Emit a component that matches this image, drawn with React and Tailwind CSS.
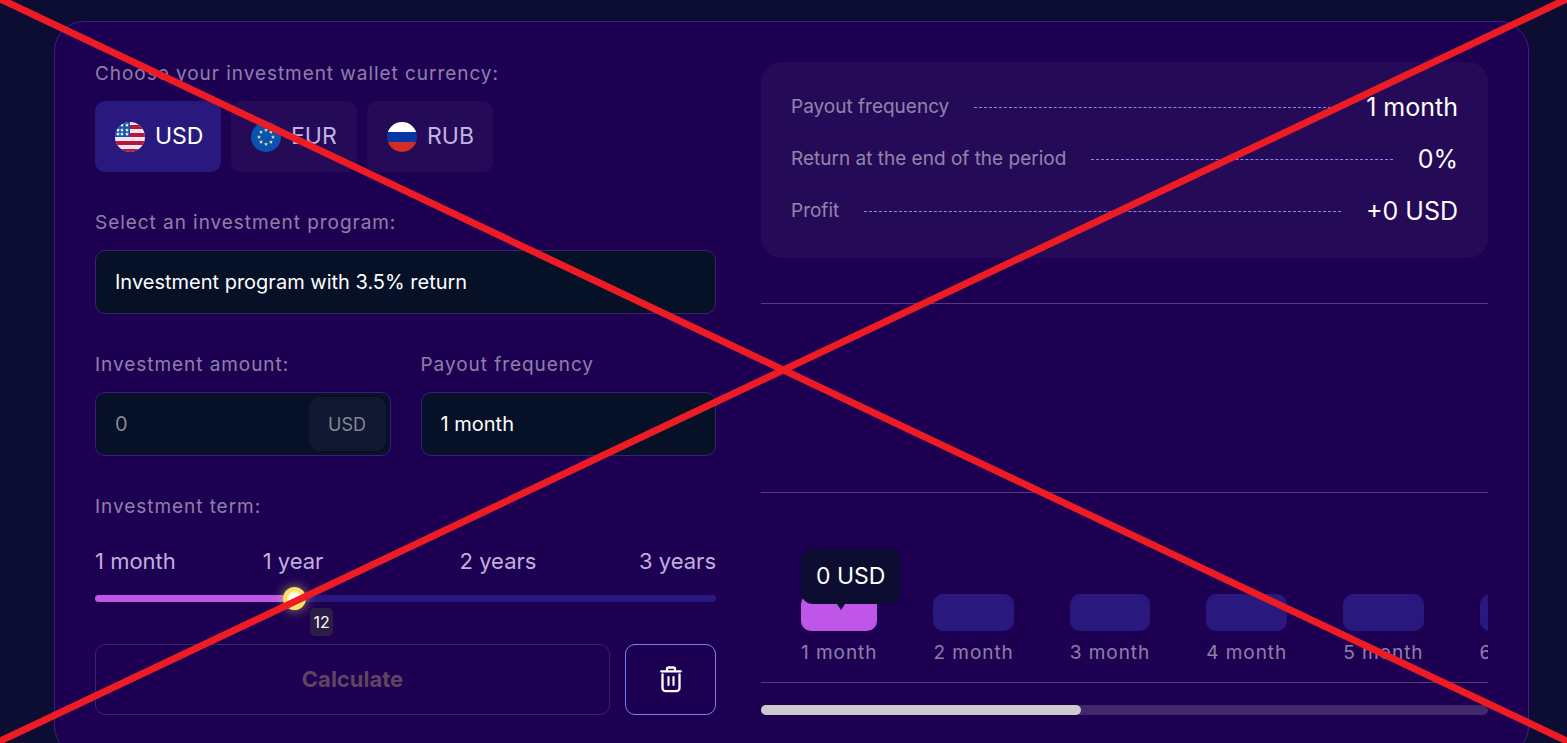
import React, { useState } from "react";

const FIELD =
  "w-full h-16 rounded-[10px] border border-[#38236e] bg-[#061128] px-[19px] text-[20px] text-white outline-none";

const MONTHS = [1, 2, 3, 4, 5, 6];

const EU_STARS = [0, 45, 90, 135, 180, 225, 270, 315];

function UsFlag() {
  return (
    <svg className="size-[30px] shrink-0" viewBox="0 0 30 30" aria-hidden="true">
      <clipPath id="us">
        <circle cx="15" cy="15" r="15" />
      </clipPath>
      <g clipPath="url(#us)">
        <rect width="30" height="30" fill="#f6e4f3" />
        {[3, 11, 19, 27].map((y) => (
          <rect key={y} y={y} width="30" height="4" fill="#b5183c" />
        ))}
        <rect width="15" height="15" fill="#0f56ac" />
        {[
          [7, 3],
          [12, 3],
          [3, 8],
          [7, 8],
          [12, 8],
          [3, 12],
          [7, 12],
          [12, 12],
        ].map(([x, y]) => (
          <Star key={x + "-" + y} x={x} y={y} fill="#ffffff" />
        ))}
      </g>
    </svg>
  );
}

function Star({ x, y, fill }) {
  return (
    <path
      transform={`translate(${x} ${y})`}
      d="M0-2 .6-.6 2-.6.9.4 1.3 1.8 0 1-1.3 1.8-.9.4-2-.6-.6-.6Z"
      fill={fill}
    />
  );
}

function EuFlag() {
  return (
    <svg className="size-[30px] shrink-0" viewBox="0 0 30 30" aria-hidden="true">
      <circle cx="15" cy="15" r="15" fill="#0952b0" />
      {EU_STARS.map((a) => (
        <Star
          key={a}
          x={15 + 7 * Math.cos((a * Math.PI) / 180)}
          y={15 + 7 * Math.sin((a * Math.PI) / 180)}
          fill="#e5e6a4"
        />
      ))}
    </svg>
  );
}

function RuFlag() {
  return (
    <svg className="size-[30px] shrink-0" viewBox="0 0 30 30" aria-hidden="true">
      <clipPath id="ru">
        <circle cx="15" cy="15" r="15" />
      </clipPath>
      <g clipPath="url(#ru)">
        <rect width="30" height="10" fill="#ffffff" />
        <rect y="10" width="30" height="10" fill="#0538a4" />
        <rect y="20" width="30" height="10" fill="#d52c26" />
      </g>
    </svg>
  );
}

function TrashIcon() {
  return (
    <svg
      className="w-[22px] h-[27px]"
      viewBox="0 0 22 27"
      fill="none"
      stroke="#ffffff"
      strokeWidth="2.3"
      strokeLinecap="round"
      strokeLinejoin="round"
      aria-hidden="true"
    >
      <path d="M1.2 5.3h19.6M7 5V3.1Q7 1.5 8.6 1.5h4.8Q15 1.5 15 3.1V5" />
      <path d="M2.5 8.5v13.4a3.3 3.3 0 0 0 3.3 3.3h10.4a3.3 3.3 0 0 0 3.3-3.3V8.5" />
      <path d="M8.5 11v8M13.5 11v8" strokeWidth="2.1" />
    </svg>
  );
}

const CURRENCIES = [
  { code: "USD", Flag: UsFlag },
  { code: "EUR", Flag: EuFlag },
  { code: "RUB", Flag: RuFlag },
];

function Label({ children, htmlFor }) {
  return (
    <label
      htmlFor={htmlFor}
      className="block mb-[15px] text-[19px] leading-6 tracking-wider text-white/50"
    >
      {children}
    </label>
  );
}

function TermSlider({ value, onChange }) {
  const part = (value - 1) / 35;
  const center = `calc(${part * 100}% + ${Math.round(12 - part * 23)}px)`;
  return (
    <div className="relative mt-[11px] h-[23px]">
      <input
        id="term"
        type="range"
        min="1"
        max="36"
        value={value}
        onChange={(e) => onChange(Number(e.target.value))}
        style={{ "--fill": center }}
        className="block w-full h-[23px] appearance-none bg-transparent outline-none [&::-webkit-slider-runnable-track]:h-[7px] [&::-webkit-slider-runnable-track]:rounded-full [&::-webkit-slider-runnable-track]:bg-[linear-gradient(to_right,#c056e8_var(--fill),#29187d_var(--fill))] [&::-webkit-slider-thumb]:appearance-none [&::-webkit-slider-thumb]:size-[23px] [&::-webkit-slider-thumb]:-mt-2 [&::-webkit-slider-thumb]:rounded-full [&::-webkit-slider-thumb]:bg-[radial-gradient(circle,#ffffff_30%,#f9df62_50%)] [&::-webkit-slider-thumb]:shadow-[0_0_12px_rgba(255,226,110,0.6)]"
      />
      <output
        htmlFor="term"
        className="absolute top-[21px] ml-[15px] w-[23px] h-7 rounded-[5px] bg-[#2b1d45] text-center text-[16px] leading-7 text-white"
        style={{ left: center }}
      >
        {value}
      </output>
    </div>
  );
}

function Calculator() {
  const [currency, setCurrency] = useState("USD");
  const [amount, setAmount] = useState("");
  const [term, setTerm] = useState(12);

  return (
    <form onSubmit={(e) => e.preventDefault()} className="min-w-0">
      <div className="flex flex-col gap-[39px]">
        <fieldset>
          <legend className="mb-[15px] text-[19px] leading-6 tracking-wider text-white/50">
            Choose your investment wallet currency:
          </legend>
          <div className="flex gap-[10px]">
            {CURRENCIES.map(({ code, Flag }) => (
              <button
                key={code}
                type="button"
                onClick={() => setCurrency(code)}
                className={
                  code === currency
                    ? "flex items-center gap-[10px] w-[126px] h-[71px] px-5 rounded-[10px] text-[23px] bg-[#29187d] text-white"
                    : "flex items-center gap-[10px] w-[126px] h-[71px] px-5 rounded-[10px] text-[23px] bg-white/4 text-[#c3b3e2]"
                }
              >
                <Flag />
                {code}
              </button>
            ))}
          </div>
        </fieldset>

        <div>
          <Label htmlFor="program">Select an investment program:</Label>
          <select id="program" className={FIELD + " appearance-none"}>
            <option>Investment program with 3.5% return</option>
          </select>
        </div>

        <div className="grid grid-cols-2 gap-[30px]">
          <div>
            <Label htmlFor="amount">Investment amount:</Label>
            <div className="flex h-16 rounded-[10px] border border-[#38236e] bg-[#061128] p-1">
              <input
                id="amount"
                placeholder="0"
                value={amount}
                onChange={(e) => setAmount(e.target.value)}
                className="min-w-0 flex-1 px-[15px] text-[20px] text-white placeholder:text-[#838894] outline-none"
              />
              <span className="flex items-center justify-center w-[77px] rounded-[10px] bg-[#101931] text-[18px] text-[#838894]">
                {currency}
              </span>
            </div>
          </div>
          <div>
            <Label htmlFor="frequency">Payout frequency</Label>
            <select id="frequency" className={FIELD + " appearance-none"}>
              <option>1 month</option>
            </select>
          </div>
        </div>

        <div>
          <Label htmlFor="term">Investment term:</Label>
          <div className="mt-[27px] grid grid-cols-[95fr_206fr_204fr_116fr] text-center text-[22px] leading-[30px] text-[#bfb0de]">
            <span className="text-left">1 month</span>
            <span>1 year</span>
            <span>2 years</span>
            <span className="text-right">3 years</span>
          </div>
          <TermSlider value={term} onChange={setTerm} />
        </div>
      </div>

      <div className="mt-[34px] flex gap-[15px]">
        <button
          type="submit"
          disabled
          className="flex-1 h-[71px] rounded-[10px] border border-[#38236e] text-[22px] font-bold text-[#5f4560]"
        >
          Calculate
        </button>
        <button
          type="button"
          aria-label="Clear"
          onClick={() => setAmount("")}
          className="flex items-center justify-center w-[91px] h-[71px] rounded-[10px] border border-[#7f80ee]"
        >
          <TrashIcon />
        </button>
      </div>
    </form>
  );
}

function SummaryRow({ name, value }) {
  return (
    <div className="flex items-center gap-[25px] leading-8">
      <dt className="text-[19px] text-white/50">{name}</dt>
      <div className="flex-1 border-t border-dashed border-[#8488f5]" />
      <dd className="text-[25px] text-white">{value}</dd>
    </div>
  );
}

function Results() {
  return (
    <div className="min-w-0">
      <dl className="flex flex-col gap-5 rounded-[20px] bg-white/4 px-[30px] pt-[29px] pb-[31px]">
        <SummaryRow name="Payout frequency" value="1 month" />
        <SummaryRow name="Return at the end of the period" value="0%" />
        <SummaryRow name="Profit" value="+0 USD" />
      </dl>

      <div className="mt-[45px] h-[190px] border-y border-[#553a82]" />
      <div className="flex items-end h-[190px] gap-14 overflow-hidden border-b border-[#553a82] pl-10 pb-[17px]">
        {MONTHS.map((m) => (
          <div key={m} className="relative shrink-0">
            <div
              className={
                m === 1
                  ? "h-[37px] rounded-[10px] bg-[#c056e8]"
                  : "h-[37px] rounded-[10px] bg-[#29187d]"
              }
            />
            <p className="mt-[10px] text-[19px] leading-6 tracking-wider text-white/50">
              {m} month
            </p>
            {m === 1 && (
              <div className="absolute left-0 bottom-[61px] rounded-xl bg-[#0d0d31] px-[15px] text-[23px] leading-[55px] whitespace-nowrap text-white">
                0 USD
                <span className="absolute left-9 top-full border-x-4 border-t-6 border-x-transparent border-t-[#0d0d31]" />
              </div>
            )}
          </div>
        ))}
      </div>
      <div className="mt-[22px] h-[10px] rounded-full bg-[#43286b]">
        <div className="w-[44%] h-full rounded-full bg-[#cbcbcd]" />
      </div>
    </div>
  );
}

function Cross() {
  return (
    <svg
      className="pointer-events-none absolute inset-0 size-full"
      viewBox="0 0 1567 743"
      preserveAspectRatio="none"
      stroke="#ed1c24"
      strokeWidth="7"
      aria-hidden="true"
    >
      <path d="M-4-3 1571 743M-4 743 1571-3" />
    </svg>
  );
}

export default function App() {
  return (
    <div className="relative h-screen overflow-hidden bg-[#0d0d33] pt-[21px] pl-[54px] pr-[38px] font-['Inter',sans-serif]">
      <main className="grid grid-cols-[621fr_727fr] gap-[45px] rounded-[30px] border border-[#3c2089] bg-[#1d0052] p-10">
        <Calculator />
        <Results />
      </main>
      <Cross />
    </div>
  );
}
